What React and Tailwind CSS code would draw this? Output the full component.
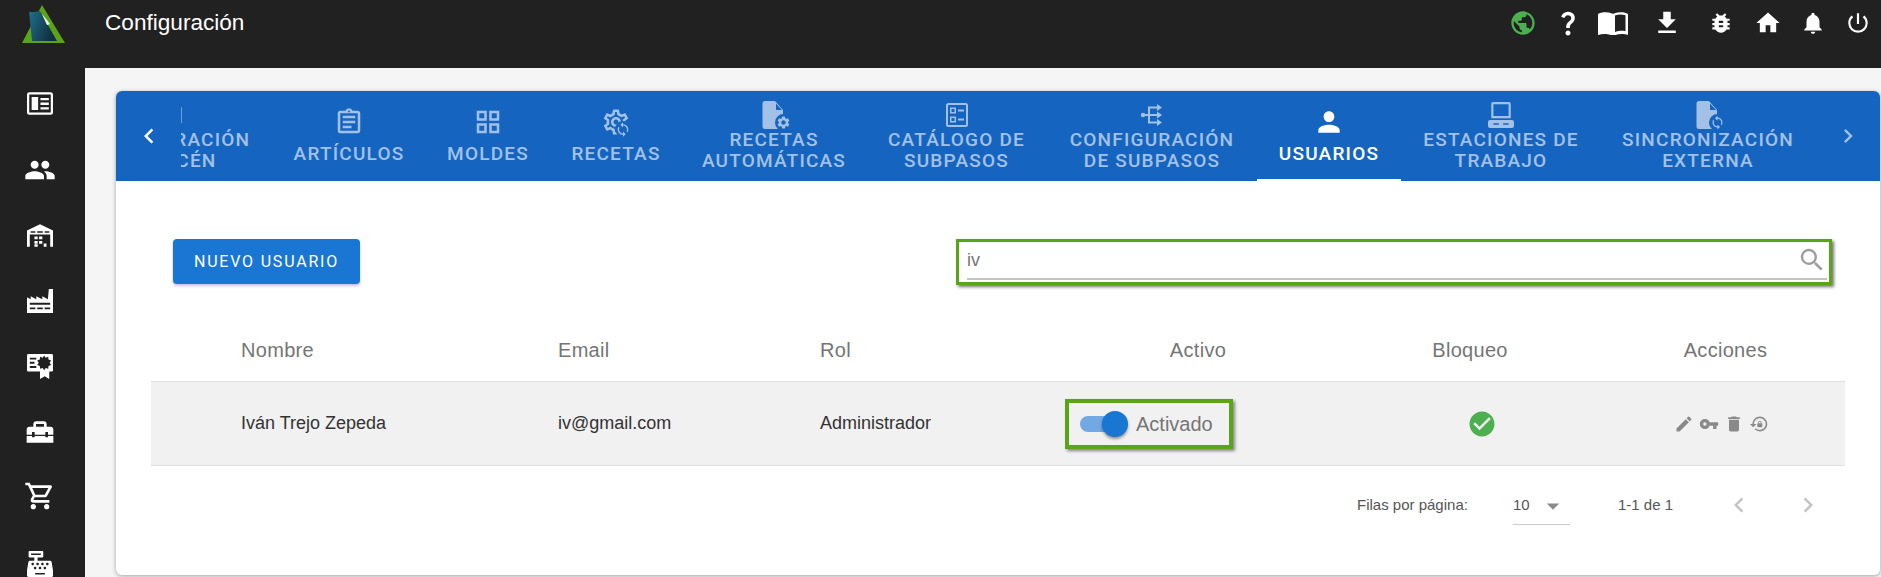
import {
  MdPeople, MdOutlineShoppingCart, MdHomeRepairService, MdPublic, MdQuestionMark, MdFileDownload,
  MdBugReport, MdHome, MdNotifications, MdPowerSettingsNew, MdOutlineAssignment, MdOutlineGridView,
  MdOutlineSettings, MdSettings, MdPerson, MdSearch, MdCheckCircle, MdEdit, MdVpnKey, MdDelete, MdLockReset,
  MdArrowDropDown, MdChevronLeft, MdChevronRight, MdSync,
} from 'react-icons/md';
import { FaCashRegister } from 'react-icons/fa';

const FONT = "font-['Roboto',sans-serif]";
const ARIAL = "font-['Liberation_Sans',sans-serif]";

// Sidebar drawings that the icon packs don't have
function NewsIcon() {
  return (
    <svg viewBox="0 0 28 24" className="w-[26px] h-[23px]" fill="none">
      <rect x="1.2" y="1.2" width="25.6" height="21.6" rx="1.5" stroke="white" strokeWidth="2.4" />
      <rect x="5" y="5" width="7" height="14" fill="white" />
      <path d="M14.500 6h9v2.500h-9zM14.500 11h9v2.500h-9zM14.500 16h9v2.500h-9z" fill="white" />
    </svg>
  );
}

function WarehouseIcon() {
  return (
    <svg viewBox="0 0 28 24" className="w-[26px] h-[23px]" fill="white">
      <path d="M14 0 0 6.500V24h3V11h22v13h3V6.500zM4 7.500h5v1.500H4zM11 7.500h6v1.500h-6zM19 7.500h5v1.500h-5z" fillRule="evenodd" />
      <path d="M8 13h3.500v3H8zM13 13h3.500v3H13zM8 18h3.500v3H8zM13 18h3.500v3H13zM8 21.500h3.500V24H8zM18 20.500h3V24h-3z" />
    </svg>
  );
}

function FactoryIcon() {
  return (
    <svg viewBox="0 0 28 26" className="w-[26px] h-[26px]" fill="white">
      <path
        fillRule="evenodd"
        d="M0 9v17h28V0h-4.500L22.500 11l-6-3v3L10 8v3L4 8v3zM3 15h22v2H3zM3 20h6v2H3zM11 20h6v2h-6zM19 20h6v2h-6z"
      />
    </svg>
  );
}

function CertificateIcon() {
  return (
    <svg viewBox="0 0 28 27" className="w-[26px] h-[25px]">
      <rect width="28" height="19" rx="1.500" fill="white" />
      <path d="M3 4h7v2H3zM3 8.500h5v2H3zM3 13h7v2H3z" fill="#212121" />
      <path d="M14 18h10v9l-5-3-5 3z" fill="white" />
      <path
        d="M18.500 1.500l1.600 2.500 2.800-.9.300 2.900 2.800 1-1.600 2.500 1.600 2.500-2.800 1-.3 2.900-2.800-.9-1.600 2.500-1.600-2.500-2.800.9-.3-2.900-2.800-1 1.600-2.500-1.600-2.500 2.800-1 .3-2.900 2.800.9z"
        fill="#212121"
      />
    </svg>
  );
}

function BookIcon() {
  return (
    <svg viewBox="0 0 30 24" className="w-[30px] h-6" fill="white">
      <path
        fillRule="evenodd"
        d="M0 3c3-2 9-2.500 14-.5 1 .4 1 .4 2 0 5-2 11-1.500 14 .5v21c-4-1.500-10-1.500-13.500.5h-3C10 22.500 4 22.500 0 24zM17 4.500V21c3-1.300 7.500-1.500 10.500-.8V4.300C24 3.200 20 3.200 17 4.500z"
      />
    </svg>
  );
}

function Logo() {
  return (
    <svg viewBox="0 0 44 39" className="w-11 h-[39px]">
      <defs>
        <linearGradient id="logoFill" x1="0" y1="0" x2="1" y2="0.4">
          <stop offset="0" stopColor="#1f6f8a" />
          <stop offset="1" stopColor="#0f2f3f" />
        </linearGradient>
      </defs>
      <path d="M20 0 43 38H0z" fill="#5aa517" />
      <path d="M7 7h5l6-1 17 30-25 0z" fill="url(#logoFill)" />
      <path d="m20 9 8 10-3 1z" fill="#ffffff" />
    </svg>
  );
}

function TaskFileIcon({ badge }) {
  return (
    <span className="relative block w-6 h-7">
      <svg viewBox="0 0 24 28" className="w-6 h-7" fill="currentColor">
        <path d="M3 0A2.500 2.500 0 0 0 .5 2.500v23A2.500 2.500 0 0 0 3 28h18V9l-8-9zM14 2.500 20 9h-6z" fillRule="evenodd" />
      </svg>
      <span className="absolute right-[-6px] bottom-[-2px] w-[17px] h-[17px] rounded-full bg-[#1565c0] flex items-center justify-center">
        {badge}
      </span>
    </span>
  );
}

function RecipeGearIcon() {
  return (
    <span className="relative block w-[30px] h-[30px]">
      <MdOutlineSettings size={30} />
      <span className="absolute right-0 bottom-0 w-4 h-4 rounded-full bg-[#1565c0] flex items-center justify-center">
        <MdSync size={17} />
      </span>
    </span>
  );
}

function CatalogIcon() {
  return (
    <svg viewBox="0 0 24 24" className="w-6 h-6" fill="currentColor">
      <path
        fillRule="evenodd"
        d="M3.500 0h17A2.500 2.500 0 0 1 23 2.500v19a2.500 2.500 0 0 1-2.500 2.500h-17A2.500 2.500 0 0 1 1 21.500v-19A2.500 2.500 0 0 1 3.500 0zM3 2v20h18V2zM5 4.500h6v6H5zM6.500 6v3h3V6zM5 13.500h6v6H5zM6.500 15v3h3v-3zM13 6.500h6v2h-6zM13 15.500h6v2h-6z"
      />
    </svg>
  );
}

function RoutesIcon() {
  return (
    <svg viewBox="0 0 24 24" className="w-6 h-6" fill="none" stroke="currentColor" strokeWidth="2">
      <path d="M3 12h18M9 12V4.500h8M9 12v7.500h8" />
      <circle cx="3" cy="12" r="2.200" fill="currentColor" stroke="none" />
      <path d="M17 1l5 3.500-5 3.500zM17 8.500l5 3.500-5 3.500zM17 16l5 3.500-5 3.500z" fill="currentColor" stroke="none" />
    </svg>
  );
}

function StationIcon() {
  return (
    <svg viewBox="0 0 24 24" className="w-[26px] h-[26px]" fill="currentColor">
      <path
        fillRule="evenodd"
        d="M4.500 0h15A1.500 1.500 0 0 1 21 1.500V15H3V1.500A1.500 1.500 0 0 1 4.500 0zM5 2v11h14V2zM2 16.500h20a2 2 0 0 1 2 2V22a2 2 0 0 1-2 2H2a2 2 0 0 1-2-2v-3.500a2 2 0 0 1 2-2zM5 19.500v1.500h5v-1.500zM14 19.500v1.500h5v-1.500z"
      />
    </svg>
  );
}

const TABS = [
  { w: 'w-[200px] pr-[8px]', lines: ['CONFIGURACIÓN', 'ALMACÉN'], icon: <span className="block w-7 h-4 border-r border-[#6f9fd9]" /> },
  { w: 'w-[154px]', lines: ['ARTÍCULOS'], icon: <MdOutlineAssignment size={30} /> },
  { w: 'w-[124px]', lines: ['MOLDES'], icon: <MdOutlineGridView size={30} /> },
  { w: 'w-[132px]', lines: ['RECETAS'], icon: <RecipeGearIcon /> },
  { w: 'w-[184px]', lines: ['RECETAS', 'AUTOMÁTICAS'], icon: <TaskFileIcon badge={<MdSettings size={15} />} /> },
  { w: 'w-[181px]', lines: ['CATÁLOGO DE', 'SUBPASOS'], icon: <CatalogIcon /> },
  { w: 'w-[210px]', lines: ['CONFIGURACIÓN', 'DE SUBPASOS'], icon: <RoutesIcon /> },
  { w: 'w-[144px]', lines: ['USUARIOS'], icon: <MdPerson size={32} />, active: true },
  { w: 'w-[200px]', lines: ['ESTACIONES DE', 'TRABAJO'], icon: <StationIcon /> },
  { w: 'w-[214px]', lines: ['SINCRONIZACIÓN', 'EXTERNA'], icon: <TaskFileIcon badge={<MdSync size={15} />} /> },
];

function Tab({ tab }) {
  const single = tab.lines.length === 1;
  return (
    <div
      className={`relative shrink-0 h-[90px] flex flex-col items-center justify-center ${tab.w} ${
        single ? 'gap-[7px]' : 'gap-0'
      } ${tab.active ? 'text-white' : 'text-[#a3c1e6]'}`}
    >
      <span className="h-7 flex items-center justify-center">{tab.icon}</span>
      <span className="text-[19px] leading-[21px] font-medium tracking-[1.2px] text-center whitespace-nowrap">
        {tab.lines.map((line) => (
          <span key={line} className="block">{line}</span>
        ))}
      </span>
      {tab.active && <span className="absolute left-0 right-0 bottom-0 h-0.5 bg-white" />}
    </div>
  );
}

const SIDE_ICONS = [
  <NewsIcon key="news" />,
  <MdPeople key="people" size={32} />,
  <WarehouseIcon key="warehouse" />,
  <FactoryIcon key="factory" />,
  <CertificateIcon key="certificate" />,
  <MdHomeRepairService key="tools" size={32} />,
  <MdOutlineShoppingCart key="cart" size={32} className="-mt-1" />,
  <FaCashRegister key="register" size={26} />,
];

export default function App() {
  return (
    <div className={`flex h-[577px] w-[1881px] overflow-hidden bg-[#f5f5f5] ${FONT}`}>
      {/* Sidebar */}
      <aside className="w-[85px] shrink-0 bg-[#212121] text-white flex flex-col">
        <div className="h-[68px] shrink-0 flex justify-start pt-[5px] pl-[22px]">
          <Logo />
        </div>
        <div className="pt-[3px] pr-[5px]">
          {SIDE_ICONS.map((icon) => (
            <div key={icon.key} className="h-[65.700px] flex items-center justify-center">
              {icon}
            </div>
          ))}
        </div>
      </aside>

      <div className="flex-1 min-w-0 flex flex-col">
        {/* Top bar */}
        <header className="h-[68px] shrink-0 bg-[#212121] text-white flex items-start pl-5 pr-[10px]">
          <h1 className={`flex-1 pt-[9px] text-[22.600px] leading-7 font-normal ${ARIAL}`}>
            Configuración
          </h1>
          <div className="flex items-center h-[46px]">
            <MdPublic size={28} className="text-[#4caf50]" />
            <MdQuestionMark size={30} className="ml-[16px]" />
            <span className="ml-[15px]"><BookIcon /></span>
            <MdFileDownload size={30} className="ml-[24px]" />
            <MdBugReport size={26} className="ml-[26px]" />
            <MdHome size={28} className="ml-[20px]" />
            <MdNotifications size={26} className="ml-[18px]" />
            <MdPowerSettingsNew size={26} className="ml-[19px]" />
          </div>
        </header>

        {/* Content */}
        <main className="flex-1 min-h-0 pt-[23px] pl-[31px] pr-px pb-0.5">
          <div className="h-full bg-white rounded-md shadow-[0_1px_4px_rgba(0,0,0,0.35)] overflow-hidden">
            <div className="h-[90px] bg-[#1565c0] flex items-center">
              <div className="w-[65px] shrink-0 flex justify-end pr-[17px] text-white">
                <MdChevronLeft size={30} />
              </div>
              <div className="flex-1 min-w-0 overflow-hidden flex justify-end">
                {TABS.map((tab) => (
                  <Tab key={tab.lines.join(' ')} tab={tab} />
                ))}
              </div>
              <div className="w-[65px] shrink-0 flex justify-center text-[#a3c1e6]">
                <MdChevronRight size={28} />
              </div>
            </div>

            <div className="flex items-start justify-between pt-[58px] pl-[57px] pr-[48px]">
              <button className="w-[187px] h-[45px] rounded bg-[#1976d2] text-white text-base font-normal tracking-[1.8px] shadow-[0_2px_3px_rgba(120,60,180,0.35)]">
                NUEVO USUARIO
              </button>
              <div className="w-[876px] h-[46px] border-[3px] border-[#59a517] shadow-[2px_2px_3px_rgba(0,0,0,0.55)] pl-[8px] pr-[2px] flex flex-col">
                <div className="flex-1 flex items-center justify-between border-b-2 border-[#c4c4c4]">
                  <span className={`text-[18px] text-[#757575] leading-none ${ARIAL}`}>iv</span>
                  <MdSearch size={30} className="text-[#9e9e9e]" />
                </div>
                <div className="h-[2px]" />
              </div>
            </div>

            <div className={`mx-[35px] mt-[29px] ${ARIAL}`}>
              <div className="h-[68px] pt-[4px] grid grid-cols-[407px_262px_245px_266px_278px_1fr] items-center text-[20px] tracking-[0.3px] text-[#757575] border-b border-[#e0e0e0]">
                <span className="pl-[90px]">Nombre</span>
                <span>Email</span>
                <span>Rol</span>
                <span className="text-center">Activo</span>
                <span className="text-center">Bloqueo</span>
                <span className="text-center pr-[3px]">Acciones</span>
              </div>
              <div className="h-[84px] grid grid-cols-[407px_262px_245px_266px_278px_1fr] items-center bg-[#f1f1f1] border-b border-[#e0e0e0] text-[18px] text-[#333333]">
                <span className="pl-[90px]">Iván Trejo Zepeda</span>
                <span>iv@gmail.com</span>
                <span>Administrador</span>
                <div className="w-[168px] h-[50px] border-4 border-[#59a517] shadow-[2px_2px_3px_rgba(0,0,0,0.45)] flex items-center pl-[11px]">
                  <span className="relative shrink-0 w-[46px] h-4 rounded-full bg-[#72a8e3]">
                    <span className="absolute right-[-2px] top-[-5px] w-[26px] h-[26px] rounded-full bg-[#1976d2] shadow-[0_2px_3px_rgba(0,0,0,0.4)]" />
                  </span>
                  <span className="ml-[10px] text-[20px] text-[#757575]">Activado</span>
                </div>
                <div className="flex justify-center pl-[24px]">
                  <MdCheckCircle size={30} className="text-[#4caf50]" />
                </div>
                <div className="flex justify-center gap-[5px] pr-[11px] text-[#8a8a8a]">
                  <MdEdit size={20} />
                  <MdVpnKey size={20} />
                  <MdDelete size={20} />
                  <MdLockReset size={20} />
                </div>
              </div>
            </div>

            <div className={`flex items-center h-[78px] pl-[1241px] text-[#555555] text-[15px] ${ARIAL}`}>
              <span className="w-[156px]">Filas por página:</span>
              <div className="relative w-[57px] h-[38px] flex items-center justify-between border-b border-[#cccccc] mt-[2px]">
                <span>10</span>
                <MdArrowDropDown size={30} className="text-[#8a8a8a] mr-[2px]" />
              </div>
              <span className="ml-[48px] w-[106px]">1-1 de 1</span>
              <MdChevronLeft size={30} className="text-[#c4c4c4]" />
              <MdChevronRight size={30} className="text-[#c4c4c4] ml-[39px]" />
            </div>
          </div>
        </main>
      </div>
    </div>
  );
}
